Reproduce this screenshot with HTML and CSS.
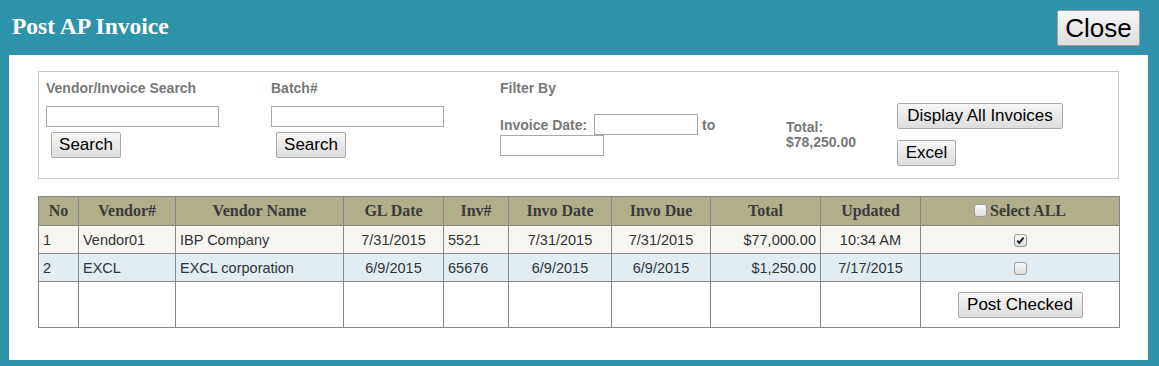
FILE: index.html
```html
<!DOCTYPE html>
<html>
<head>
<meta charset="utf-8">
<title>Post AP Invoice</title>
<link rel="stylesheet" href="styles.css">
</head>
<body>
<div class="dialog">
  <div class="titlebar">
    <h1 class="title">Post AP Invoice</h1>
    <button class="btn btn-close">Close</button>
  </div>
  <div class="panel">
    <div class="filters">
      <div class="group">
        <div class="label">Vendor/Invoice Search</div>
        <input class="field" type="text">
        <button class="btn btn-search">Search</button>
      </div>
      <div class="group">
        <div class="label">Batch#</div>
        <input class="field" type="text">
        <button class="btn btn-search">Search</button>
      </div>
      <div class="group">
        <div class="label">Filter By</div>
        <div class="daterow">
          <span class="label date-label">Invoice Date:</span>
          <input class="field field-date" type="text">
          <span class="label to-label">to</span>
          <input class="field field-date" type="text">
        </div>
      </div>
      <div class="group total">
        <div class="label total-line">Total:</div>
        <div class="label total-line">$78,250.00</div>
      </div>
      <div class="group actions">
        <button class="btn btn-display">Display All Invoices</button>
        <button class="btn btn-excel">Excel</button>
      </div>
    </div>

    <table class="grid">
      <colgroup>
        <col style="width:40px"><col style="width:97px"><col style="width:168px"><col style="width:100px"><col style="width:65px"><col style="width:103px"><col style="width:99px"><col style="width:110px"><col style="width:100px"><col style="width:199px">
      </colgroup>
      <thead>
        <tr>
          <th>No</th>
          <th>Vendor#</th>
          <th>Vendor Name</th>
          <th>GL Date</th>
          <th>Inv#</th>
          <th>Invo Date</th>
          <th>Invo Due</th>
          <th>Total</th>
          <th>Updated</th>
          <th><input class="chk chk-head" type="checkbox">Select ALL</th>
        </tr>
      </thead>
      <tbody>
        <tr class="row-a">
          <td>1</td>
          <td>Vendor01</td>
          <td>IBP Company</td>
          <td class="c">7/31/2015</td>
          <td>5521</td>
          <td class="c">7/31/2015</td>
          <td class="c">7/31/2015</td>
          <td class="r">$77,000.00</td>
          <td class="c">10:34 AM</td>
          <td class="c"><input class="chk" type="checkbox" checked></td>
        </tr>
        <tr class="row-b">
          <td>2</td>
          <td>EXCL</td>
          <td>EXCL corporation</td>
          <td class="c">6/9/2015</td>
          <td>65676</td>
          <td class="c">6/9/2015</td>
          <td class="c">6/9/2015</td>
          <td class="r">$1,250.00</td>
          <td class="c">7/17/2015</td>
          <td class="c"><input class="chk" type="checkbox"></td>
        </tr>
        <tr class="row-foot">
          <td></td><td></td><td></td><td></td><td></td><td></td><td></td><td></td><td></td>
          <td class="c"><button class="btn btn-post">Post Checked</button></td>
        </tr>
      </tbody>
    </table>
  </div>
</div>
</body>
</html>
```

FILE: styles.css
```css
html, body {
  margin: 0;
  padding: 0;
}
body {
  background: #2e93a8;
  width: 1159px;
  height: 366px;
  overflow: hidden;
  font-family: "Liberation Sans", Arial, sans-serif;
}
.titlebar {
  height: 55px;
  display: flex;
  justify-content: space-between;
  align-items: flex-start;
}
.title {
  margin: 13px 0 0 12px;
  font-family: "Liberation Serif", "Times New Roman", serif;
  font-weight: bold;
  font-size: 23.5px;
  line-height: 26px;
  color: #ffffff;
}
.btn {
  font-family: "Liberation Sans", Arial, sans-serif;
  font-size: 17px;
  color: #000;
  background: linear-gradient(#f6f6f6, #dddddd);
  border: 1px solid #a9a9a9;
  border-radius: 2px;
  padding: 0;
  height: 26px;
  line-height: 22px;
  box-sizing: border-box;
  white-space: nowrap;
}
.btn-close {
  margin: 10px 19px 0 0;
  width: 83px;
  height: 36px;
  font-size: 26px;
  line-height: 32px;
  border-color: #9c9c9c;
}
.panel {
  margin-left: 9px;
  width: 1139px;
  height: 305px;
  background: #ffffff;
  box-sizing: border-box;
  padding: 16px 0 0 29px;
}
.filters {
  width: 1081px;
  height: 108px;
  box-sizing: border-box;
  border: 1px solid #c8c8c8;
  padding: 8px 0 0 7px;
  display: grid;
  grid-template-columns: 225px 229px 286px 111px auto;
  align-items: start;
}
.group {
  display: flex;
  flex-direction: column;
  align-items: flex-start;
}
.label {
  font-size: 14px;
  line-height: 16px;
  font-weight: bold;
  color: #787878;
}
.field {
  margin-top: 10px;
  width: 173px;
  height: 21px;
  box-sizing: border-box;
  border: 1px solid #a8a8a8;
  padding: 0 2px;
  font-size: 13px;
}
.btn-search {
  margin: 5px 0 0 5px;
  width: 70px;
}
.daterow {
  margin-top: 18px;
  width: 286px;
  display: flex;
  flex-wrap: wrap;
  align-items: center;
}
.date-label {
  width: 94px;
}
.field-date {
  margin-top: 0;
  width: 104px;
}
.to-label {
  margin-left: 4px;
  width: 70px;
}
.total {
  padding-top: 40px;
}
.total-line {
  line-height: 15px;
}
.actions {
  padding-top: 23px;
}
.btn-display {
  width: 166px;
}
.btn-excel {
  margin-top: 11px;
  width: 59px;
}
.grid {
  margin-top: 17px;
  width: 1081px;
  table-layout: fixed;
  border-collapse: collapse;
  border: 1px solid #888888;
  font-size: 14.5px;
  color: #333333;
}
.grid th, .grid td {
  border: 1px solid #888888;
  padding: 0 4px;
  vertical-align: middle;
  white-space: nowrap;
  overflow: hidden;
}
.grid th {
  height: 28px;
  background: #b1af8a;
  font-family: "Liberation Serif", "Times New Roman", serif;
  font-weight: bold;
  font-size: 16px;
  color: #3a3a3a;
  text-align: center;
}
.grid td {
  height: 27px;
  text-align: left;
}
.grid td.c { text-align: center; }
.grid td.r { text-align: right; }
.row-a td { background: #f6f5f1; }
.row-b td { background: #e2edf3; }
.row-foot td {
  height: 45px;
  background: #ffffff;
}
.btn-post {
  width: 125px;
}
.chk {
  -webkit-appearance: none;
  appearance: none;
  width: 13px;
  height: 13px;
  margin: 0;
  box-sizing: border-box;
  border: 1px solid #9a9a9a;
  border-radius: 3px;
  background: linear-gradient(#fbfbfb, #dcdcdc);
  vertical-align: middle;
}
.chk:checked {
  background: url("data:image/svg+xml,%3Csvg xmlns='http://www.w3.org/2000/svg' width='11' height='11' viewBox='0 0 11 11'%3E%3Cpath d='M2.2 5.6 L4.3 7.8 L8.6 2.6' fill='none' stroke='%23222' stroke-width='2'/%3E%3C/svg%3E") center / 11px 11px no-repeat, linear-gradient(#fbfbfb, #dcdcdc);
}
.chk-head {
  margin: -3px 3px 0 0;
}
```
